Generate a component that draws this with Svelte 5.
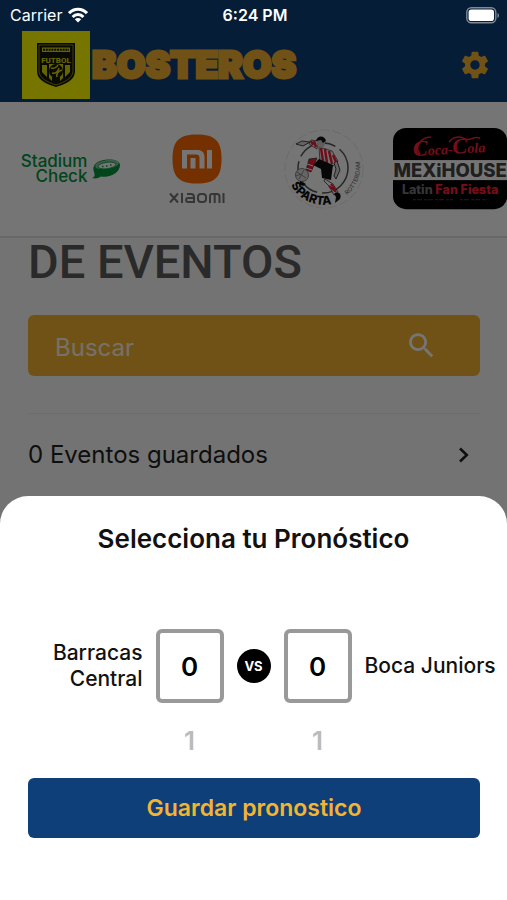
<script>
  let query = $state('');
  let home = $state(0);
  let away = $state(0);
</script>

<div class="app">
  <div class="status">
    <span class="carrier">
      Carrier
      <svg width="20" height="16" viewBox="0 0 20 16" aria-hidden="true">
        <g fill="none" stroke="#fff" stroke-width="3">
          <path d="M1 6.2C6 .8 14 .8 19 6.2" />
          <path d="M4.6 10C7.6 6.8 12.4 6.8 15.4 10" />
        </g>
        <path d="M6.8 12.2c1.8-1.7 4.600-1.700 6.400 0L10 15.500z" fill="#fff" />
      </svg>
    </span>
    <span class="time">6:24 PM</span>
    <svg class="battery" width="34" height="17" viewBox="0 0 34 17" aria-hidden="true">
      <rect x=".8" y=".8" width="29" height="15" rx="4.500" fill="none" stroke="#7e8997" stroke-width="1.400" />
      <rect x="2.600" y="2.600" width="25.400" height="11.400" rx="2.800" fill="#fff" />
      <path d="M31.500 6c2 .8 2 4.200 0 5z" fill="#7e8997" />
    </svg>
  </div>

  <header>
    <svg class="crest" width="68" height="68" viewBox="0 0 68 68" role="img" aria-label="Escudo">
      <rect width="68" height="68" fill="#ff0" />
      <path d="M15 12H53V40C53 49 44 53 34 56 24 53 15 49 15 40Z" fill="#16160a" />
      <path d="M17 14H51V39.500C51 47 43 51 34 54 25 51 17 47 17 39.500Z" fill="none" stroke="#dada00" stroke-width=".6" />
      <path d="M20 16.500H48V21H20Z" fill="#dada00" />
      <path d="M21 18.800H47" stroke="#16160a" stroke-width="2" stroke-dasharray="2 .8" />
      <text x="34" y="31.500" text-anchor="middle" font-family="Roboto, sans-serif" font-weight="700" font-size="8" fill="#e5e500">FUTBOL</text>
      <path d="M20 34H25V46L20 41ZM43 34H48V41L43 46ZM27 33H41V47L38 50V46H30V50L27 47Z" fill="#dada00" />
      <circle cx="34" cy="40" r="7" fill="#16160a" />
      <path d="M29 37C32 38 35 36 36 34M30 42C33 43 36 41 37 37M35 46C34 43 36 40 40 39" fill="none" stroke="#dada00" stroke-width="1.500" />
      <path d="M32 47H36V53H32Z" fill="#16160a" />
    </svg>
    <h1>BOSTEROS</h1>
    <button class="gear" aria-label="Ajustes">
      <svg width="32" height="32" viewBox="0 0 24 24" fill="currentColor">
        <path d="M19.430 12.980c.04-.32.07-.64.07-.98s-.03-.66-.07-.98l2.110-1.650c.19-.15.24-.42.12-.64l-2-3.460c-.12-.22-.39-.3-.61-.22l-2.490 1c-.52-.4-1.080-.73-1.690-.98l-.38-2.650C14.460 2.180 14.250 2 14 2h-4c-.25 0-.46.18-.49.42l-.38 2.650c-.61.25-1.170.59-1.690.98l-2.490-1c-.23-.09-.49 0-.61.22l-2 3.460c-.13.22-.07.49.12.64l2.110 1.650c-.04.32-.07.65-.07.98s.03.66.07.98l-2.110 1.650c-.19.15-.24.42-.12.64l2 3.460c.12.22.39.3.61.22l2.490-1c.52.4 1.080.73 1.690.98l.38 2.650c.03.24.24.42.49.42h4c.25 0 .46-.18.49-.42l.38-2.650c.61-.25 1.170-.59 1.690-.98l2.490 1c.23.09.49 0 .61-.22l2-3.460c.12-.22.07-.49-.12-.64l-2.110-1.650zM12 15.500c-1.930 0-3.500-1.570-3.500-3.500s1.570-3.500 3.500-3.500 3.500 1.570 3.500 3.500-1.570 3.500-3.500 3.500z" />
      </svg>
    </button>
  </header>

  <div class="sponsors">
    <div class="stadium">
      <span>Stadium<br />Check</span>
      <svg width="30" height="22" viewBox="0 0 30 22" aria-hidden="true">
        <path d="M1 20C4 19 4 17 3 14 0 7 7 2 16 1.500 23 1 29 3 29 7 29 14 20 20 10 18.500 7 20.500 4 21 1 20Z" fill="#00963c" />
        <ellipse cx="16" cy="6.500" rx="12" ry="4.400" transform="rotate(-8 16 6.500)" fill="#8cc9a4" />
        <ellipse cx="16" cy="7.500" rx="9" ry="3.200" transform="rotate(-8 16 7.500)" fill="#fff" stroke="#00963c" stroke-width=".8" />
        <path d="M11 8.500h1.500M15 8h1.500M19 7h1.500" stroke="#00963c" stroke-width="1.300" />
      </svg>
    </div>

    <div class="xiaomi">
      <svg width="50" height="50" viewBox="0 0 50 50" aria-hidden="true">
        <path d="M25 .5C43 .5 49.500 7 49.500 25S43 49.500 25 49.500.5 43 .5 25 7 .5 25 .5Z" fill="#ff6900" />
        <path d="M10 16H25C30 16 32.500 18.500 32.500 23V34.500H27.500V24C27.500 21.500 26.500 20.500 24 20.500H15V34.500H10ZM18.500 24H23.500V34.500H18.500ZM35 16H40V34.500H35Z" fill="#fff" />
      </svg>
      <svg width="56" height="12" viewBox="0 0 56 12" role="img" aria-label="Xiaomi">
        <g fill="none" stroke="#777" stroke-width="2">
          <path d="M1 1.500 9 10.500M9 1.500 1 10.500M13 1V11M18 2H22C24 2 25 3 25 5V10H19C16.500 10 16.500 6 19 6H25" />
          <rect x="29" y="2" width="8" height="8" rx="3" />
          <path d="M41 11V4C41 2.500 42 2 43 2H48C49.500 2 50.500 3 50.500 4.500V11M45.700 2V11M54.500 1V11" />
        </g>
      </svg>
    </div>

    <svg class="sparta" width="82" height="84" viewBox="0 0 82 84" role="img" aria-label="Sparta Rotterdam">
      <circle cx="41" cy="42" r="39" fill="none" stroke="#ececec" stroke-width="1.200" stroke-dasharray="9 3" />
      <circle cx="40" cy="41" r="25" fill="none" stroke="#555" stroke-width="1.500" stroke-dasharray="40 5" />
      <path id="sparta-arc" d="M8 58A37 37 0 0 0 57 74" fill="none" />
      <path id="rotterdam-arc" d="M64 68A36 36 0 0 0 77 36" fill="none" />
      <text font-family="Inter, sans-serif" font-weight="800" font-size="12" fill="#111"><textPath href="#sparta-arc">SPARTA</textPath></text>
      <text font-family="Inter, sans-serif" font-weight="500" font-size="6" fill="#777"><textPath href="#rotterdam-arc">ROTTERDAM</textPath></text>
      <path d="M35 14 28 13 26 17 34 22ZM36 20 49 24 55 34 50 39 37 35Z" fill="#f2f2f2" stroke="#333" stroke-width=".7" />
      <path d="M28 14l2 4M38 21l2 13M42 22l2 14M46 24l3 13M50 28l3 7M31 14l2 6" stroke="#f01b35" stroke-width="2.400" />
      <ellipse cx="38" cy="16" rx="4" ry="5" fill="#ccc" />
      <path d="M33 14C34 8 42 8 43 14L40 16 38 13Z" fill="#111" />
      <path d="M13 17 19 14 27 15 20 19ZM54 34 57 43 53 52 51 49 53 42 51 36Z" fill="#d8d8d8" stroke="#333" stroke-width=".9" />
      <path d="M36 32 50 38 48 53 39 51 38 42 30 38Z" fill="#111" />
      <path d="M34 31 26 32 23 43 28 45 31 38Z" fill="#f01b35" stroke="#333" stroke-width=".7" />
      <path d="M24 37l6 2M23 41l6 2" stroke="#fff" />
      <circle cx="19" cy="48" r="6.500" fill="#ddd" stroke="#666" stroke-width=".8" />
      <path d="M14 45l9 6M16 52l5-9M13 49l5-2" stroke="#777" stroke-width=".8" />
      <path d="M42 52 50 57 55 65 51 68 46 59 41 54Z" fill="#fff" stroke="#333" stroke-width=".8" />
      <path d="M48 57l5 7M46 59l7 6" stroke="#f01b35" stroke-width="2" />
      <path d="M51 67C56 63 59 68 57 72L52 76 53 70ZM17 54l6 3-3 2-4-2Z" fill="#111" />
    </svg>

    <svg class="house" viewBox="0 0 114 81" role="img" aria-label="Coca-Cola Mexihouse Latin Fan Fiesta">
      <rect width="114" height="81" rx="13" fill="#000" />
      <rect y="32" width="114" height="20" fill="#fff" />
      <g text-anchor="middle">
        <text x="56" y="26" font-family="'Liberation Serif', serif" font-style="italic" font-weight="700" font-size="14" transform="rotate(-3 56 22)" fill="#ff2038"><tspan font-size="22">C</tspan>oca-<tspan font-size="22">C</tspan>ola</text>
        <text x="57" y="48.500" font-family="Inter, sans-serif" font-weight="800" font-size="18.500" fill="#444">MEXiHOUSE</text>
        <text x="57" y="66" font-family="Inter, sans-serif" font-weight="800" font-size="12.500" fill="#ff2038"><tspan fill="#777">Latin</tspan> Fan Fiesta</text>
      </g>
      <path d="M27 26C21 20 27 9 38 9M56 14C60 8 67 8 72 11 77 13 80 8 87 10" fill="none" stroke="#ff2038" stroke-width="1.500" />
      <path d="M20 71.500H60M67 71.500H94" stroke="#444" stroke-dasharray="3 1 5 2" />
    </svg>
  </div>

  <main>
    <h2>DE EVENTOS</h2>
    <div class="search">
      <input type="text" aria-label="Buscar" placeholder="Buscar" bind:value={query} />
      <button aria-label="Buscar eventos">
        <svg width="33" height="33" viewBox="0 0 24 24" fill="currentColor">
          <path d="M15.500 14h-.79l-.28-.27C15.410 12.590 16 11.110 16 9.500 16 5.910 13.090 3 9.500 3S3 5.910 3 9.500 5.910 16 9.500 16c1.610 0 3.090-.59 4.230-1.570l.27.28v.79l5 4.990L20.490 19l-4.990-5zm-6 0C7.010 14 5 11.990 5 9.500S7.010 5 9.500 5 14 7.010 14 9.500 11.990 14 9.500 14z" />
        </svg>
      </button>
    </div>
    <a class="saved" href="#guardados">
      0 Eventos guardados
      <svg width="12" height="16" viewBox="0 0 12 16" fill="none" stroke="currentColor" stroke-width="2.600" aria-hidden="true">
        <path d="M2 1.500 8.800 8 2 14.500" />
      </svg>
    </a>
  </main>

  <div class="scrim"></div>

  <section class="sheet" role="dialog" aria-labelledby="sheet-title">
    <h3 id="sheet-title">Selecciona tu Pronóstico</h3>
    <div class="match">
      <label class="home" for="home">Barracas Central</label>
      <input id="home" type="text" inputmode="numeric" bind:value={home} />
      <span class="vs">VS</span>
      <input id="away" type="text" inputmode="numeric" bind:value={away} />
      <label for="away">Boca Juniors</label>
      <button class="next first" onclick={() => home++}>{Number(home) + 1}</button>
      <button class="next second" onclick={() => away++}>{Number(away) + 1}</button>
    </div>
    <button class="save">Guardar pronostico</button>
  </section>
</div>

<style>
  :global(body) {
    margin: 0;
  }
  .app {
    position: relative;
    display: flex;
    flex-direction: column;
    min-height: 100vh;
    overflow: hidden;
    background: #fafafa;
    color: #111;
    font-family: Inter, Roboto, sans-serif;
  }
  .app * {
    box-sizing: border-box;
  }
  button,
  input {
    margin: 0;
    padding: 0;
    border: 0;
    background: none;
    color: inherit;
    font: inherit;
  }
  svg {
    display: block;
    flex: none;
  }
  .status {
    display: grid;
    grid-template-columns: 1fr auto 1fr;
    align-items: center;
    height: 30px;
    padding: 0 7px 0 10px;
    background: #0f3f78;
    color: #fff;
    font-size: 16px;
    line-height: 30px;
  }
  .status > * {
    position: relative;
    z-index: 2;
  }
  .carrier {
    display: flex;
    align-items: center;
    gap: 6px;
  }
  .time {
    font-weight: 600;
  }
  .battery {
    justify-self: end;
  }
  header {
    display: flex;
    align-items: center;
    height: 72px;
    padding: 0 16px 2px 22px;
    background: #0f3f78;
    color: #f5b430;
  }
  h1 {
    flex: 1;
    margin: 0 0 0 2px;
    font-size: 37px;
    font-weight: 900;
    line-height: 40px;
    -webkit-text-stroke: 3px #f5b430;
    stroke-linejoin: round;
  }
  .sponsors {
    display: grid;
    grid-template-columns: repeat(4, 1fr);
    gap: 12px;
    align-items: center;
    justify-items: center;
    height: 136px;
    padding-left: 14px;
    border-bottom: 2px solid #e2e2e2;
    background: #fff;
  }
  .stadium {
    display: flex;
    align-items: center;
    gap: 4px;
    color: #00963c;
    font-size: 17px;
    font-weight: 500;
    line-height: 15px;
    text-align: right;
  }
  .xiaomi {
    display: flex;
    flex-direction: column;
    align-items: center;
    gap: 8px;
  }
  .house {
    width: 100%;
  }
  main {
    padding: 0 27px 0 28px;
  }
  h2 {
    margin: 0;
    color: #5c5c5c;
    font-family: Roboto, sans-serif;
    font-size: 47px;
    font-weight: 500;
    line-height: 48px;
  }
  .search {
    display: flex;
    align-items: center;
    height: 61px;
    margin: 29px 0 37px;
    padding: 0 42px 0 27px;
    border-radius: 6px;
    background: #f5b430;
    color: #fff;
  }
  .search input {
    flex: 1;
    min-width: 0;
    padding-top: 4px;
    outline: 0;
    font-size: 24px;
    line-height: 32px;
  }
  .search input::placeholder {
    color: #fff;
    opacity: 0.9;
  }
  .saved {
    display: flex;
    align-items: center;
    justify-content: space-between;
    height: 82px;
    padding-right: 10px;
    border-top: 1px solid #eee;
    color: #222;
    font-size: 24px;
    text-decoration: none;
  }
  .scrim {
    position: absolute;
    inset: 0;
    z-index: 1;
    background: rgba(0, 0, 0, 0.54);
  }
  .sheet {
    position: absolute;
    inset: auto 0 0;
    z-index: 3;
    padding: 27px 0 62px;
    border-radius: 28px 28px 0 0;
    background: #fff;
  }
  h3 {
    margin: 0 0 74px;
    font-size: 26px;
    font-weight: 600;
    line-height: 32px;
    text-align: center;
  }
  .match {
    display: grid;
    grid-template-columns: 1fr 68px 34px 68px 1fr;
    column-gap: 13px;
    row-gap: 24px;
    align-items: center;
    justify-items: center;
  }
  .match input {
    width: 68px;
    height: 74px;
    border: 4px solid #999;
    border-radius: 6px;
    font-size: 26px;
    font-weight: 600;
    text-align: center;
    color: #000;
  }
  label {
    justify-self: start;
    font-size: 21px;
    font-weight: 500;
    line-height: 26px;
  }
  .home {
    justify-self: end;
    width: min-content;
    text-align: right;
  }
  .vs {
    width: 34px;
    border-radius: 50%;
    background: #000;
    color: #fff;
    font-size: 13px;
    font-weight: 700;
    line-height: 34px;
    text-align: center;
  }
  .next {
    color: #bbb;
    font-size: 26px;
    font-weight: 600;
    line-height: 28px;
  }
  .first {
    grid-column: 2;
  }
  .second {
    grid-column: 4;
  }
  .save {
    display: block;
    width: calc(100% - 55px);
    height: 60px;
    margin: 23px 27px 0 28px;
    border-radius: 6px;
    background: #0f3f78;
    color: #f5b430;
    font-size: 23px;
    font-weight: 600;
  }
</style>
